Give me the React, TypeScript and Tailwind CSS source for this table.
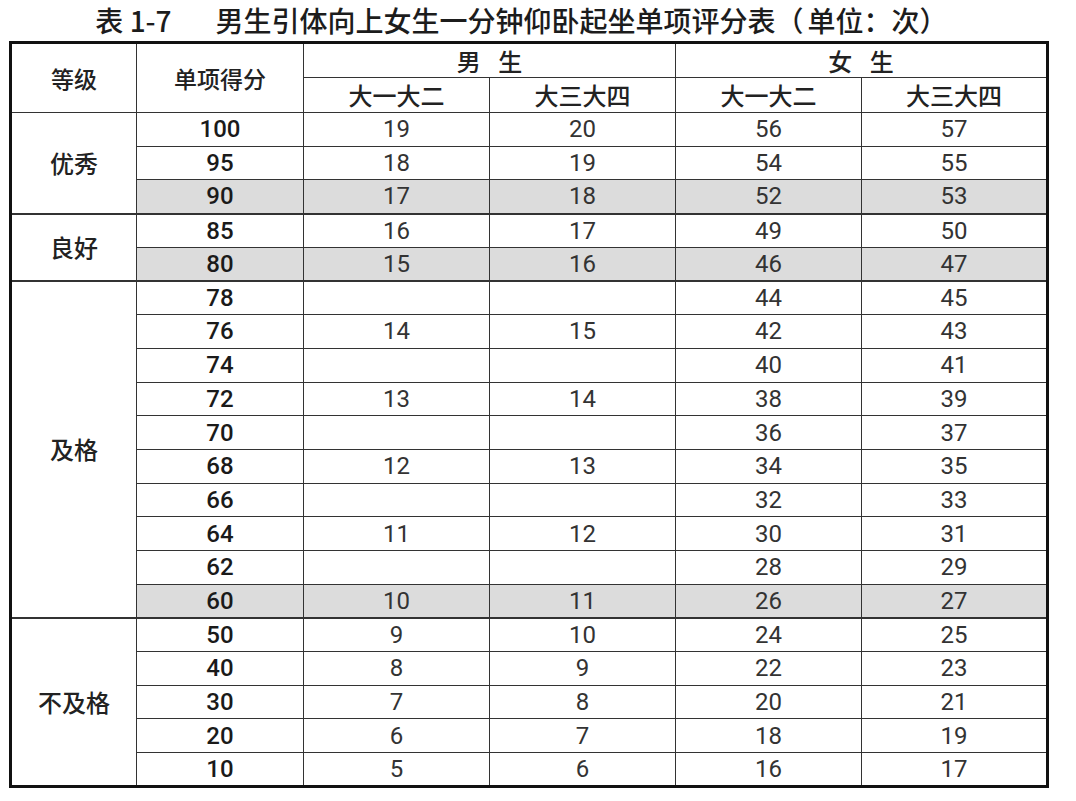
import * as React from 'react';

type Row = {
  score: number;
  m1: string;
  m2: string;
  f1: string;
  f2: string;
  shaded?: boolean;
};

type Group = {
  grade: string;
  rows: Row[];
};

const groups: Group[] = [
  {
    grade: '优秀',
    rows: [
      { score: 100, m1: '19', m2: '20', f1: '56', f2: '57' },
      { score: 95, m1: '18', m2: '19', f1: '54', f2: '55' },
      { score: 90, m1: '17', m2: '18', f1: '52', f2: '53', shaded: true },
    ],
  },
  {
    grade: '良好',
    rows: [
      { score: 85, m1: '16', m2: '17', f1: '49', f2: '50' },
      { score: 80, m1: '15', m2: '16', f1: '46', f2: '47', shaded: true },
    ],
  },
  {
    grade: '及格',
    rows: [
      { score: 78, m1: '', m2: '', f1: '44', f2: '45' },
      { score: 76, m1: '14', m2: '15', f1: '42', f2: '43' },
      { score: 74, m1: '', m2: '', f1: '40', f2: '41' },
      { score: 72, m1: '13', m2: '14', f1: '38', f2: '39' },
      { score: 70, m1: '', m2: '', f1: '36', f2: '37' },
      { score: 68, m1: '12', m2: '13', f1: '34', f2: '35' },
      { score: 66, m1: '', m2: '', f1: '32', f2: '33' },
      { score: 64, m1: '11', m2: '12', f1: '30', f2: '31' },
      { score: 62, m1: '', m2: '', f1: '28', f2: '29' },
      { score: 60, m1: '10', m2: '11', f1: '26', f2: '27', shaded: true },
    ],
  },
  {
    grade: '不及格',
    rows: [
      { score: 50, m1: '9', m2: '10', f1: '24', f2: '25' },
      { score: 40, m1: '8', m2: '9', f1: '22', f2: '23' },
      { score: 30, m1: '7', m2: '8', f1: '20', f2: '21' },
      { score: 20, m1: '6', m2: '7', f1: '18', f2: '19' },
      { score: 10, m1: '5', m2: '6', f1: '16', f2: '17' },
    ],
  },
];

const cjk = "font-['Noto_Sans_CJK_SC','Noto_Sans',sans-serif]";
const num = "font-['Roboto','Noto_Sans',sans-serif]";

export default function App() {
  return (
    <div className="w-[1076px] h-[801px] bg-white text-[#222] overflow-hidden">
      {/* Title */}
      <h1 className={`${cjk} h-[41px] pr-[33px] text-center text-[28px] leading-[40px] font-medium text-[#1c1c1c]`}>
        表 1-7<span className="inline-block w-[44px]" />男生引体向上女生一分钟仰卧起坐单项评分表（<span className="ml-[4px]">单位：次</span>）
      </h1>

      <table className="ml-[9px] w-[1040px] table-fixed border-collapse border-[3px] border-[#111]">
        <colgroup>
          <col className="w-[126px]" />
          <col className="w-[167px]" />
          <col className="w-[186px]" />
          <col className="w-[186px]" />
          <col className="w-[186px]" />
          <col className="w-[186px]" />
        </colgroup>
        <thead>
          <tr className="h-[35px]">
            <th rowSpan={2} className={`${cjk} border border-[#333] text-[23px] font-medium`}>
              等级
            </th>
            <th rowSpan={2} className={`${cjk} border border-[#333] text-[23px] font-medium`}>
              单项得分
            </th>
            <th colSpan={2} className={`${cjk} border border-[#333] text-[24px] leading-[30px] font-medium tracking-[0.25em] pl-[0.25em]`}>
              男 生
            </th>
            <th colSpan={2} className={`${cjk} border border-[#333] text-[24px] leading-[30px] font-medium tracking-[0.25em] pl-[0.25em]`}>
              女 生
            </th>
          </tr>
          <tr className="h-[35px]">
            {['大一大二', '大三大四', '大一大二', '大三大四'].map((t, i) => (
              <th key={i} className={`${cjk} border border-[#333] text-[24px] leading-[30px] font-medium`}>
                {t}
              </th>
            ))}
          </tr>
        </thead>
        <tbody>
          {groups.map((g) =>
            g.rows.map((r, i) => {
              const bg = r.shaded ? 'bg-[#dcdcdc]' : '';
              const groupEnd = i === g.rows.length - 1 ? 'border-b-2' : '';
              return (
                <tr key={r.score} className="h-[33.7px]">
                  {i === 0 && (
                    <td
                      rowSpan={g.rows.length}
                      className={`${cjk} border border-b-2 border-[#333] text-center text-[24px] font-medium`}
                    >
                      {g.grade}
                    </td>
                  )}
                  <td className={`${num} ${bg} ${groupEnd} border border-[#333] text-center text-[24px] leading-[30px] font-medium text-[#1a1a1a]`}>
                    {r.score}
                  </td>
                  {[r.m1, r.m2, r.f1, r.f2].map((v, j) => (
                    <td
                      key={j}
                      className={`${num} ${bg} ${groupEnd} border border-[#333] text-center text-[24px] leading-[30px] text-[#333]`}
                    >
                      {v}
                    </td>
                  ))}
                </tr>
              );
            })
          )}
        </tbody>
      </table>
    </div>
  );
}
